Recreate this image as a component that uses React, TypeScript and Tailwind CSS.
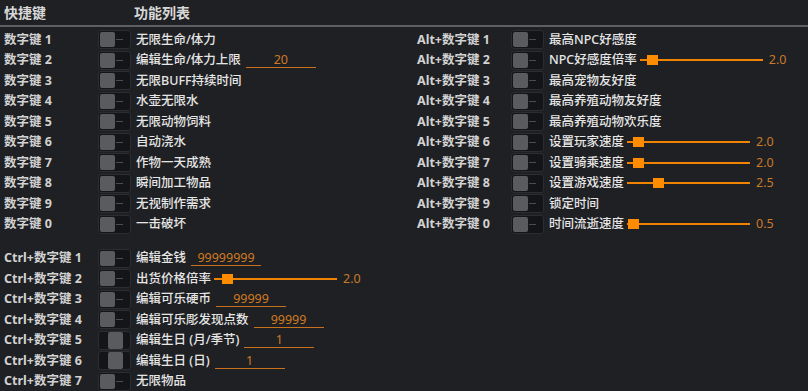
import React from "react";

type Item = {
  key: string;
  label: string;
  input?: { value: string };
  slider?: { value: string; pos: number };
  mid?: boolean;
};

const left: Item[] = [
  { key: "数字键 1", label: "无限生命/体力" },
  { key: "数字键 2", label: "编辑生命/体力上限", input: { value: "20" } },
  { key: "数字键 3", label: "无限BUFF持续时间" },
  { key: "数字键 4", label: "水壶无限水" },
  { key: "数字键 5", label: "无限动物饲料" },
  { key: "数字键 6", label: "自动浇水" },
  { key: "数字键 7", label: "作物一天成熟" },
  { key: "数字键 8", label: "瞬间加工物品" },
  { key: "数字键 9", label: "无视制作需求" },
  { key: "数字键 0", label: "一击破坏" },
];

const ctrl: Item[] = [
  { key: "Ctrl+数字键 1", label: "编辑金钱", input: { value: "99999999" } },
  { key: "Ctrl+数字键 2", label: "出货价格倍率", slider: { value: "2.0", pos: 8 } },
  { key: "Ctrl+数字键 3", label: "编辑可乐硬币", input: { value: "99999" } },
  { key: "Ctrl+数字键 4", label: "编辑可乐彫发现点数", input: { value: "99999" } },
  { key: "Ctrl+数字键 5", label: "编辑生日 (月/季节)", input: { value: "1" }, mid: true },
  { key: "Ctrl+数字键 6", label: "编辑生日 (日)", input: { value: "1" }, mid: true },
  { key: "Ctrl+数字键 7", label: "无限物品" },
];

const right: Item[] = [
  { key: "Alt+数字键 1", label: "最高NPC好感度" },
  { key: "Alt+数字键 2", label: "NPC好感度倍率", slider: { value: "2.0", pos: 7 } },
  { key: "Alt+数字键 3", label: "最高宠物友好度" },
  { key: "Alt+数字键 4", label: "最高养殖动物友好度" },
  { key: "Alt+数字键 5", label: "最高养殖动物欢乐度" },
  { key: "Alt+数字键 6", label: "设置玩家速度", slider: { value: "2.0", pos: 6 } },
  { key: "Alt+数字键 7", label: "设置骑乘速度", slider: { value: "2.0", pos: 6 } },
  { key: "Alt+数字键 8", label: "设置游戏速度", slider: { value: "2.5", pos: 26 } },
  { key: "Alt+数字键 9", label: "锁定时间" },
  { key: "Alt+数字键 0", label: "时间流逝速度", slider: { value: "0.5", pos: 1 } },
];

function Toggle({ mid }: { mid?: boolean }) {
  return (
    <div className="relative w-[33px] h-[19px] shrink-0 rounded-[3px] bg-[#141518] border border-[#2b2d31]">
      {mid ? (
        <div className="absolute left-[9px] top-[0px] w-[15px] h-[17px] rounded-[2px] bg-[#595b5f]" />
      ) : (
        <>
          <div className="absolute left-[1px] top-[1px] w-[15px] h-[15px] rounded-[2px] bg-[#595b5f]" />
          <div className="absolute left-[17px] top-[8px] w-[7px] h-px bg-[#4a4c50]" />
        </>
      )}
    </div>
  );
}

function Row({ item }: { item: Item }) {
  return (
    <div className="flex items-center h-[20.5px]">
      <div className="w-[94px] shrink-0 font-bold text-[#d2d2d2]">{item.key}</div>
      <Toggle mid={item.mid} />
      <div className="ml-[5px] text-[#e6e6e6] font-medium whitespace-nowrap">{item.label}</div>
      {item.input && (
        <div className="ml-[5px] w-[70px] h-[16px] border-b border-[#c8701c] text-center text-[#d07a22] leading-[16px]">
          {item.input.value}
        </div>
      )}
      {item.slider && (
        <div className="flex items-center">
          <div className="relative ml-[3px] w-[123px] h-[12px] flex items-center">
            <div className="w-full h-[2px] bg-[#f08400]" />
            <div
              className="absolute top-[1px] w-[11px] h-[10px] bg-[#ff8c00]"
              style={{ left: item.slider.pos }}
            />
          </div>
          <div className="ml-[6px] text-[#c97a2a]">{item.slider.value}</div>
        </div>
      )}
    </div>
  );
}

export default function App() {
  return (
    <div
      className="w-[808px] h-[391px] overflow-hidden bg-[#1f2023] text-[12.5px] leading-none"
      style={{ fontFamily: '"Noto Sans", "Noto Sans CJK SC", sans-serif' }}
    >
      <div className="flex items-center h-[25px] pl-[4px] font-bold text-[14px] text-[#d8d8d8]">
        <div className="w-[130px]">快捷键</div>
        <div>功能列表</div>
      </div>
      <div className="h-[2px] bg-[#5e5f62]" />
      <div className="flex pt-[2.5px] pl-[4px]">
        <div className="w-[413px] shrink-0">
          {left.map((it) => (
            <Row key={it.key} item={it} />
          ))}
          <div className="h-[13.5px]" />
          {ctrl.map((it) => (
            <Row key={it.key} item={it} />
          ))}
        </div>
        <div>
          {right.map((it) => (
            <Row key={it.key} item={it} />
          ))}
        </div>
      </div>
    </div>
  );
}
